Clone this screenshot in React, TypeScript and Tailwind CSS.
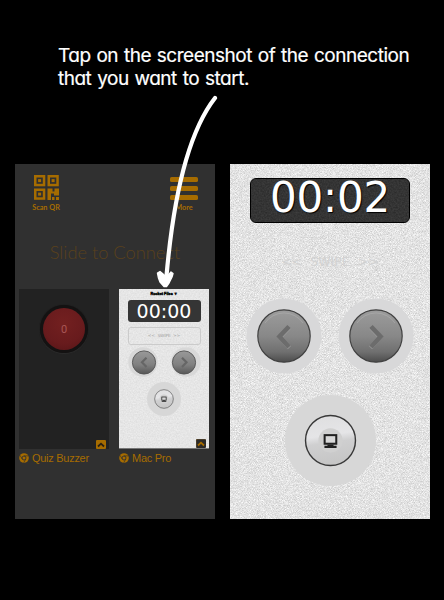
import React from "react";

function Grain({ id, freq, slope, shift }: { id: string; freq: number; slope: number; shift: number }) {
  return (
    <svg className="pointer-events-none absolute inset-0 h-full w-full rounded-[inherit]" aria-hidden="true">
      <filter id={id} x="0" y="0" width="100%" height="100%" colorInterpolationFilters="sRGB">
        <feTurbulence type="fractalNoise" baseFrequency={freq} numOctaves={2} seed={7} />
        <feColorMatrix
          type="matrix"
          values={`${slope} 0 0 0 ${shift} ${slope} 0 0 0 ${shift} ${slope} 0 0 0 ${shift} 0 0 0 0 1`}
        />
      </filter>
      <rect width="100%" height="100%" filter={`url(#${id})`} />
    </svg>
  );
}

function QrIcon() {
  const eye = (x: number, y: number) => (
    <g key={`${x}-${y}`}>
      <rect x={x + 1.25} y={y + 1.25} width="8.8" height="8.8" fill="none" stroke="#a66c00" strokeWidth="2.5" />
      <rect x={x + 4.1} y={y + 4.1} width="3" height="3" fill="#a66c00" />
    </g>
  );
  return (
    <svg width="25" height="25" viewBox="0 0 25 25">
      {[eye(0, 0), eye(13.5, 0), eye(0, 13.5)]}
      <path fill="#a66c00" d="M13.500 13.500h5v3h2v-3h4.500v7h-5v-2h-3v6.500h-3.500zM18 22h2.500v3H18zM22 22h3v3h-3z" />
    </svg>
  );
}

function MenuIcon() {
  return (
    <svg width="28" height="23" viewBox="0 0 28 23" fill="#a66c00">
      <rect width="28" height="5" rx="1.6" />
      <rect y="9" width="28" height="5" rx="1.6" />
      <rect y="18" width="28" height="5" rx="1.6" />
    </svg>
  );
}

function ChromeIcon() {
  return (
    <svg width="10" height="10" viewBox="0 0 10 10">
      <circle cx="5" cy="5" r="4.8" fill="#a66c00" />
      <circle cx="5" cy="5" r="2" fill="#a66c00" stroke="#303030" strokeWidth="0.9" />
      <path d="M5 2.9h4.3M3.2 6 1 2.3M6.8 6 4.8 9.6" stroke="#303030" strokeWidth="0.7" />
    </svg>
  );
}

function Corner({ inverted = false }: { inverted?: boolean }) {
  return (
    <svg width="10" height="9" viewBox="0 0 10 9">
      <rect width="10" height="9" rx="1" fill={inverted ? "#2b2a28" : "#a66c00"} />
      <path
        d="M2 6.500 5 3.700l3 2.800"
        fill="none"
        stroke={inverted ? "#a66c00" : "#2b2112"}
        strokeWidth="1.8"
      />
      {inverted && <path d="M0 9V0h10" fill="none" stroke="#8b6a30" strokeWidth="0.6" />}
    </svg>
  );
}

function RoundButton({ size, dir, id }: { size: number; dir: "left" | "right"; id: string }) {
  return (
    <svg width={size} height={size} viewBox="0 0 76 76">
      <defs>
        <linearGradient id={id} x1="0" y1="0" x2="0" y2="1">
          <stop offset="0" stopColor="#9c9c9c" />
          <stop offset="0.5" stopColor="#888888" />
          <stop offset="0.8" stopColor="#707070" />
          <stop offset="1" stopColor="#4c4c4c" />
        </linearGradient>
      </defs>
      <circle cx="38" cy="38" r="37.5" fill="#d8d8d9" />
      <circle cx="38" cy="38" r="26.2" fill={`url(#${id})`} stroke="#414141" strokeWidth="1.2" />
      <path d="M19 25a23 23 0 0 1 38 0" fill="none" stroke="#b4b4b4" strokeWidth="1" opacity=".5" />
      <g transform={dir === "right" ? "translate(76 0) scale(-1 1)" : undefined}>
        <path d="M43 28.500 33.500 38.500 43 49" transform="translate(.5 .6)" fill="none" stroke="#959595" strokeWidth="4.600" />
        <path d="M43 28.500 33.500 38.500 43 49" fill="none" stroke="#6c6c6c" strokeWidth="4.600" />
      </g>
    </svg>
  );
}

function MonitorButton({ size, id }: { size: number; id: string }) {
  return (
    <svg width={size} height={size} viewBox="0 0 90 90">
      <defs>
        <linearGradient id={id} x1="0" y1="0" x2="0.15" y2="1">
          <stop offset="0" stopColor="#dededf" />
          <stop offset="0.45" stopColor="#e5e5e7" />
          <stop offset="0.6" stopColor="#cfcfd0" />
          <stop offset="1" stopColor="#c6c6c6" />
        </linearGradient>
      </defs>
      <circle cx="45" cy="45" r="45" fill="#d7d7d7" />
      <circle cx="45" cy="45" r="24.7" fill={`url(#${id})`} stroke="#383838" strokeWidth="1.4" />
      <circle cx="45" cy="45" r="12" fill="#d0d0d0" />
      <rect x="39.2" y="39.7" width="11.500" height="8.500" fill="#d8d8d8" stroke="#202020" strokeWidth="2" />
      <path d="M42 49h6v1.300h3V52.300H39v-2h3z" fill="#202020" />
    </svg>
  );
}

function ConnectScreen() {
  return (
    <section className="flex h-[355px] w-[200px] flex-col bg-[#303030] font-['Lato','sans-serif'] text-[#a66c00]">
      <header className="flex h-[50px] items-start justify-between pl-[16px] pr-[16px] pt-[11px]">
        <div className="flex w-[30px] flex-col items-center">
          <QrIcon />
          <span className="mt-[3px] whitespace-nowrap text-[7.3px] font-bold leading-[9px]">Scan QR</span>
        </div>
        <div className="flex w-[30px] flex-col items-center pt-[2px]">
          <MenuIcon />
          <span className="mt-[3px] text-[7.3px] font-bold leading-[9px]">More</span>
        </div>
      </header>
      <h1 className="mt-[24px] h-[51px] text-center text-[18.3px] font-light leading-[28px] text-[#5a411c]">
        Slide to Connect
      </h1>
      <div className="flex gap-[10px] px-1">
        <div className="w-[90px]">
          <div className="flex h-[160px] flex-col bg-[#222]">
            <div className="ml-[21px] mt-[16px] flex h-[48px] w-[48px] items-center justify-center rounded-full bg-[#141212] shadow-[0_0_1px_#141212,0_1px_1px_#303030]">
              <div className="flex h-[42px] w-[42px] items-center justify-center rounded-full bg-[radial-gradient(circle_at_50%_35%,#732020,#681b1d_60%,#541416)] pt-[2px] font-['Roboto','sans-serif'] text-[11px] text-[#a95656]">
                0
              </div>
            </div>
            <div className="mr-[3px] mt-auto flex justify-end">
              <Corner />
            </div>
          </div>
          <Label>Quiz Buzzer</Label>
        </div>
        <div className="w-[90px]">
          <div className="relative flex h-[160px] flex-col items-center overflow-hidden border-b border-[#777] bg-[#e6e6e6]">
            <Grain id="fine" freq={0.7} slope={0.1} shift={0.85} />
            <div className="relative mt-[2px] whitespace-nowrap font-['Liberation_Sans','sans-serif'] text-[3.8px] font-bold leading-[6px] text-black [-webkit-text-stroke:0.4px_#000]">
              Rocket Files ▼
            </div>
            <div className="relative mt-[3px] flex h-[22px] w-[73px] items-center justify-center rounded-[3px] bg-[#353535] font-['DejaVu_Sans','sans-serif'] text-[19px] leading-none text-white">
              00:00
            </div>
            <div className="relative mt-[5px] flex h-[18px] w-[73px] items-center justify-center rounded-[3px] border border-[#cbcbcb] font-['DejaVu_Sans','sans-serif'] text-[4.2px] text-[#a0a0a0]">
              &lt;&lt; &nbsp;SWIPE&nbsp; &gt;&gt;
            </div>
            <div className="relative mt-[2px] flex w-[73px] justify-between">
              <SmallRound dir="left" />
              <SmallRound dir="right" />
            </div>
            <div className="relative mt-[5px]">
              <MonitorButton size={34} id="monitorSmall" />
            </div>
            <div className="absolute bottom-0 right-[3px] flex">
              <Corner inverted />
            </div>
          </div>
          <Label>Mac Pro</Label>
        </div>
      </div>
    </section>
  );
}

function SmallRound({ dir }: { dir: "left" | "right" }) {
  return (
    <svg width="30" height="30" viewBox="0 0 30 30">
      <defs>
        <linearGradient id={`small-${dir}`} x1="0" y1="0" x2="0" y2="1">
          <stop offset="0" stopColor="#999" />
          <stop offset="0.6" stopColor="#808080" />
          <stop offset="1" stopColor="#565656" />
        </linearGradient>
      </defs>
      <circle cx="15" cy="15" r="14.7" fill="#d8d8d8" />
      <circle cx={dir === "left" ? 16 : 13} cy="15.5" r="11.6" fill={`url(#small-${dir})`} stroke="#555" strokeWidth="0.9" />
      <path
        d={dir === "left" ? "M18.500 10.800 14 15.300l4.500 4.600" : "M11 10.800 15.500 15.300l-4.500 4.600"}
        fill="none"
        stroke="#666"
        strokeWidth="2.2"
      />
    </svg>
  );
}

function Label({ children }: { children: React.ReactNode }) {
  return (
    <div className="flex h-[18px] items-center gap-[3px] whitespace-nowrap font-['Liberation_Sans','sans-serif'] text-[11px] tracking-[-0.28px]">
      <ChromeIcon />
      <span>{children}</span>
    </div>
  );
}

function RemoteScreen() {
  return (
    <section className="relative h-[355px] w-[200px] overflow-hidden bg-[#e5e5e5]">
      <Grain id="coarse" freq={1.37} slope={0.32} shift={0.728} />
      <div className="relative flex flex-col items-center font-['DejaVu_Sans','sans-serif']">
        <div className="relative mt-[14px] h-[45px] w-[160px] rounded-[6px] border border-black bg-[#343434]">
          <Grain id="dark" freq={0.6} slope={0.12} shift={0.145} />
          <div className="relative mt-[-2px] text-center text-[42px] leading-[42px] tracking-[-0.2px] text-white [text-shadow:1px_1px_1px_#000]">
            00:02
          </div>
        </div>
        <div className="mt-[30px] h-[18px] whitespace-pre text-[12.5px] leading-[18px] text-[#d2d2d2]">
          {"<<  SWIPE  >>"}
        </div>
        <div className="mt-[27px] flex w-[168px] justify-between">
          <RoundButton size={76} dir="left" id="arrowLeft" />
          <RoundButton size={76} dir="right" id="arrowRight" />
        </div>
        <div className="mt-[20.5px]">
          <MonitorButton size={91} id="monitorLarge" />
        </div>
      </div>
    </section>
  );
}

export default function App() {
  return (
    <main className="relative h-[600px] w-[444px] overflow-hidden bg-black">
      <div className="h-[164px] whitespace-nowrap pl-[58px] pt-[44px] font-['Inter','sans-serif'] text-[19px] leading-[23px] tracking-[-0.49px] [word-spacing:1px] text-white [-webkit-text-stroke:0.2px_#fff] [font-feature-settings:'cv11']">
        <p>Tap on the screenshot of the connection</p>
        <p>that you want to start.</p>
      </div>
      <div className="flex gap-[15px] pl-[15px]">
        <ConnectScreen />
        <RemoteScreen />
      </div>
      <svg className="absolute left-[150px] top-[90px]" width="80" height="200" viewBox="150 90 80 200">
        <path d="M215 98C190 130 174 190 166.500 276" fill="none" stroke="#fff" strokeWidth="4.200" strokeLinecap="round" />
        <path d="M157.500 273 160 271.500 162.500 273.500 164.500 275.500 168.500 275 171 272 173 273.500 172 277 169 283 166.500 286.500 164 286.500 160 282 158.500 278Z" fill="#fff" stroke="#fff" strokeWidth="1.4" strokeLinejoin="round" />
      </svg>
    </main>
  );
}
